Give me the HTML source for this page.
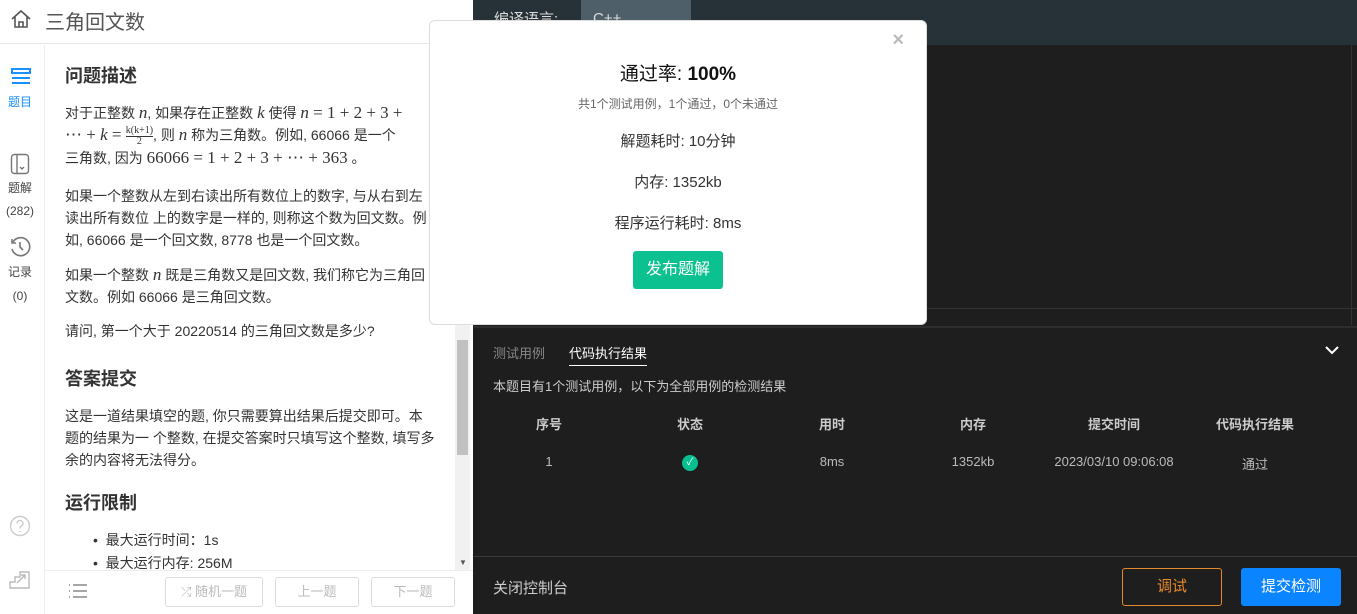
<!DOCTYPE html>
<html><head><meta charset="utf-8"><style>
*{margin:0;padding:0;box-sizing:border-box}
body{width:1357px;height:614px;overflow:hidden;position:relative;font-family:"Liberation Sans","Noto Sans CJK SC",sans-serif;background:#fff}
.a{position:absolute}
.p{position:absolute;left:65px;font-size:14px;color:#333;line-height:22px;white-space:nowrap}
.m{font-family:"Liberation Serif",serif;font-size:17px}
h3{position:absolute;left:65px;font-size:18px;color:#333;font-weight:bold;line-height:22px}
.side{font-size:12px;color:#444;text-align:center;width:40px;left:0}
.btn{border:1px solid #ddd;border-radius:3px;color:#bbb;font-size:13px;text-align:center;line-height:28px;height:30px;background:#fff}
.th{font-size:13px;color:#ccc;font-weight:bold;text-align:center;width:100px}
.td{font-size:13px;color:#bbb;text-align:center;width:160px}
</style></head><body>
<div class="a" style="left:0;top:0;width:473px;height:44px;border-bottom:1px solid #e8e8e8"></div>
<svg class="a" style="left:10px;top:8px" width="22" height="22" viewBox="0 0 22 22" fill="none" stroke="#555" stroke-width="1.6"><path d="M2 11 L11 3 L20 11 M5 9 V19 H17 V9 M9 19 V14 H13 V19"/></svg>
<div class="a" style="left:45px;top:6px;font-size:20px;color:#555">三角回文数</div>
<div class="a" style="left:44px;top:45px;width:1px;height:569px;background:#eee"></div>
<svg class="a" style="left:9px;top:67px" width="24" height="20" viewBox="0 0 24 20" fill="none" stroke="#1890ff" stroke-width="2"><path d="M3 2 H21 V6 H3 Z M3 11 H21 M3 16 H21"/></svg>
<div class="a side" style="top:93px;color:#1890ff">题目</div>
<svg class="a" style="left:10px;top:153px" width="20" height="22" viewBox="0 0 20 22" fill="none" stroke="#777" stroke-width="1.4"><rect x="1.5" y="1.5" width="17" height="19" rx="3"/><path d="M7 2 V20 M10 14 l2 2 l2-2"/></svg>
<div class="a side" style="top:179px">题解</div>
<div class="a side" style="top:204px">(282)</div>
<svg class="a" style="left:9px;top:236px" width="22" height="22" viewBox="0 0 22 22" fill="none" stroke="#777" stroke-width="1.6"><path d="M4 6 A9 9 0 1 1 3 13 M3 3 V7 H7 M11 6 V11 L14 14"/></svg>
<div class="a side" style="top:263px">记录</div>
<div class="a side" style="top:289px">(0)</div>
<svg class="a" style="left:9px;top:515px" width="22" height="22" viewBox="0 0 22 22" fill="none" stroke="#ccc" stroke-width="1.4"><circle cx="11" cy="11" r="9.5"/><path d="M8 8.5 a3 3 0 1 1 4 2.8 c-1 .4-1 1-1 2.2 M11 16 v1"/></svg>
<svg class="a" style="left:9px;top:568px" width="22" height="22" viewBox="0 0 22 22" fill="none" stroke="#bbb" stroke-width="1.4"><path d="M1 20 V14 H6 V9 H11 V4 H20 V20 Z M8 15 L16 7 M12 7 H16 V11"/></svg>

<h3 style="top:65px">问题描述</h3>
<div class="p" style="top:102px">对于正整数 <i class="m">n</i>, 如果存在正整数 <i class="m">k</i> 使得 <span class="m"><i>n</i> = 1 + 2 + 3 +</span><br><span class="m">⋯ + <i>k</i> = </span><span style="display:inline-block;vertical-align:middle;text-align:center;font-family:'Liberation Serif';font-size:10px;line-height:10px"><span style="border-bottom:1px solid #333;display:block">k(k+1)</span>2</span>, 则 <i class="m">n</i> 称为三角数。例如, 66066 是一个<br>三角数, 因为 <span class="m">66066 = 1 + 2 + 3 + ⋯ + 363</span> 。</div>
<div class="p" style="top:185px">如果一个整数从左到右读出所有数位上的数字, 与从右到左<br>读出所有数位 上的数字是一样的, 则称这个数为回文数。例<br>如, 66066 是一个回文数, 8778 也是一个回文数。</div>
<div class="p" style="top:264px">如果一个整数 <i class="m">n</i> 既是三角数又是回文数, 我们称它为三角回<br>文数。例如 66066 是三角回文数。</div>
<div class="p" style="top:320px">请问, 第一个大于 20220514 的三角回文数是多少?</div>
<h3 style="top:368px">答案提交</h3>
<div class="p" style="top:405px">这是一道结果填空的题, 你只需要算出结果后提交即可。本<br>题的结果为一 个整数, 在提交答案时只填写这个整数, 填写多<br>余的内容将无法得分。</div>
<h3 style="top:492px">运行限制</h3>
<div class="p" style="top:529px;left:93px;line-height:23px">• &nbsp;最大运行时间：1s<br>• &nbsp;最大运行内存: 256M</div>

<div class="a" style="left:455px;top:45px;width:15px;height:525px;background:#f1f1f1"></div>
<div class="a" style="left:457px;top:340px;width:11px;height:115px;background:#c1c1c1"></div>
<div class="a" style="left:459px;top:558px;font-size:8px;color:#555">▼</div>
<div class="a" style="left:45px;top:570px;width:428px;height:44px;border-top:1px solid #eee;background:#fff"></div>
<svg class="a" style="left:68px;top:583px" width="20" height="16" viewBox="0 0 20 16" stroke="#888" stroke-width="1.4"><path d="M1 2h1M1 8h1M1 14h1M5 2h14M5 8h14M5 14h14"/></svg>
<div class="a btn" style="left:165px;top:577px;width:98px">⤮ 随机一题</div>
<div class="a btn" style="left:275px;top:577px;width:84px">上一题</div>
<div class="a btn" style="left:371px;top:577px;width:84px">下一题</div>

<div class="a" style="left:473px;top:0;width:884px;height:614px;background:#1e1e1e"></div>
<div class="a" style="left:473px;top:0;width:884px;height:45px;background:#263238"></div>
<div class="a" style="left:494px;top:8px;font-size:15px;color:#ddd">编译语言:</div>
<div class="a" style="left:581px;top:0;width:110px;height:30px;background:#4f5f69;border-radius:0 0 4px 4px;color:#ddd;font-size:15px;padding:10px 12px">C++</div>
<div class="a" style="left:1351px;top:45px;width:1px;height:280px;background:#333"></div>
<div class="a" style="left:530px;top:308px;width:827px;height:1px;background:#333"></div>
<div class="a" style="left:473px;top:326px;width:884px;height:2px;background:#2e2e2e"></div>
<div class="a" style="left:493px;top:343px;font-size:13px;color:#888">测试用例</div>
<div class="a" style="left:569px;top:343px;font-size:13px;color:#fff;border-bottom:1px solid #fff;padding-bottom:3px">代码执行结果</div>
<svg class="a" style="left:1325px;top:345px" width="14" height="10" viewBox="0 0 14 10" fill="none" stroke="#fff" stroke-width="2"><path d="M1 2 L7 8 L13 2"/></svg>
<div class="a" style="left:493px;top:376px;font-size:13px;color:#ccc">本题目有1个测试用例，以下为全部用例的检测结果</div>
<div class="a th" style="left:499px;top:414px">序号</div>
<div class="a th" style="left:640px;top:414px">状态</div>
<div class="a th" style="left:782px;top:414px">用时</div>
<div class="a th" style="left:923px;top:414px">内存</div>
<div class="a th" style="left:1064px;top:414px">提交时间</div>
<div class="a th" style="left:1205px;top:414px">代码执行结果</div>
<div class="a td" style="left:469px;top:454px">1</div>
<div class="a" style="left:682px;top:455px;width:16px;height:16px;border-radius:50%;background:#07c08f;color:#fff;font-size:10px;text-align:center;line-height:16px">✓</div>
<div class="a td" style="left:752px;top:454px">8ms</div>
<div class="a td" style="left:893px;top:454px">1352kb</div>
<div class="a td" style="left:1034px;top:454px">2023/03/10 09:06:08</div>
<div class="a td" style="left:1175px;top:454px">通过</div>
<div class="a" style="left:473px;top:556px;width:884px;height:1px;background:#3a3a3a"></div>
<div class="a" style="left:493px;top:577px;font-size:15px;color:#ccc">关闭控制台</div>
<div class="a" style="left:1122px;top:568px;width:100px;height:38px;border:1px solid #e6892a;border-radius:3px;color:#e6892a;font-size:15px;text-align:center;line-height:36px">调试</div>
<div class="a" style="left:1241px;top:568px;width:100px;height:38px;background:#0a84ff;border-radius:3px;color:#fff;font-size:15px;text-align:center;line-height:38px">提交检测</div>

<div class="a" style="left:429px;top:20px;width:498px;height:305px;background:#fff;border-radius:6px;border:1px solid #ddd;text-align:center;color:#333">
<div class="a" style="right:22px;top:8px;font-size:20px;color:#bbb;font-weight:bold">×</div>
<div style="margin-top:38px;font-size:19px;color:#111">通过率: <b>100%</b></div>
<div style="margin-top:9px;font-size:12px;color:#666">共1个测试用例，1个通过，0个未通过</div>
<div style="margin-top:18px;font-size:15px">解题耗时: 10分钟</div>
<div style="margin-top:20px;font-size:15px">内存: 1352kb</div>
<div style="margin-top:20px;font-size:15px">程序运行耗时: 8ms</div>
<div style="margin:18px auto 0;width:90px;height:38px;background:#0bc18f;border-radius:3px;color:#fff;font-size:16px;line-height:38px">发布题解</div>
</div>
</body></html>
